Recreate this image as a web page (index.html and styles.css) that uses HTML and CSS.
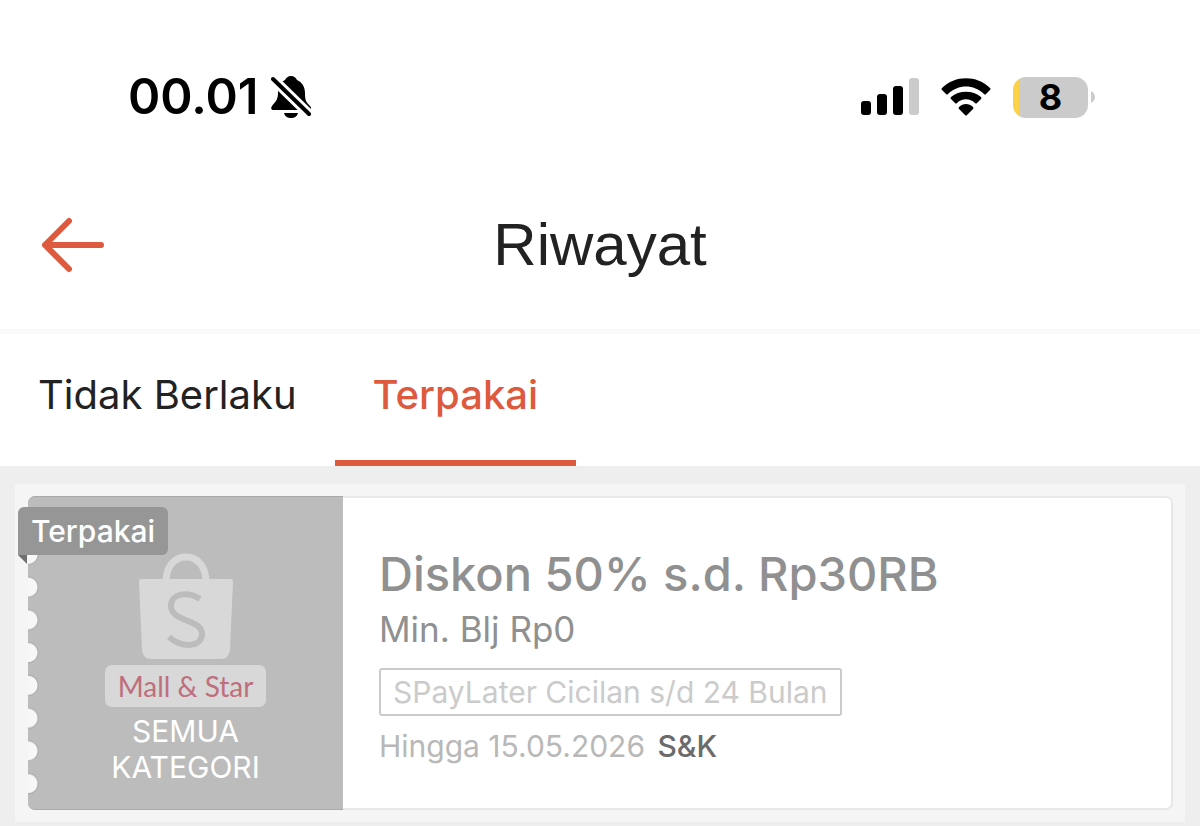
FILE: index.html
```
<!DOCTYPE html>
<html lang="id">
<head>
    <meta charset="UTF-8">
    <meta name="viewport" content="width=device-width, initial-scale=1.0">
    <title>Riwayat</title>
    <link rel="stylesheet" href="styles.css">
</head>
<body>
    <div class="status_bar">
        <div class="status_left">
            <time class="clock">00.01</time>
            <svg class="ico_bell" viewBox="0 0 42 44" width="42" height="44" aria-hidden="true">
                <path d="M20 1C17 1 15 3 14 5C9 7 7 12 7 18C7 25 4 27 1 31C-1 34 1 35 3 35H37C40 35 41 33 39 31C35 27 34 25 34 18C34 12 31 7 26 5C25 3 23 1 20 1Z"/>
                <path d="M13 38H27C26 42 23 43 20 43C17 43 14 42 13 38Z"/>
                <path class="cut" d="M-2 0L43 44"/>
                <path class="slash" d="M2 4L38 39"/>
            </svg>
        </div>
        <div class="status_right">
            <svg class="ico_signal" viewBox="0 0 58 38" width="58" height="38" aria-hidden="true">
                <rect x="0" y="23" width="10" height="14" rx="3"/>
                <rect x="16" y="16" width="10" height="21" rx="3"/>
                <rect x="32" y="8" width="10" height="29" rx="3"/>
                <rect class="off" x="48" y="0" width="10" height="37" rx="3"/>
            </svg>
            <svg class="ico_wifi" viewBox="0 0 50 38" width="50" height="38" aria-hidden="true">
                <path d="M1 10C14 -3 36 -3 49 10Q50 11 49 12L45 16Q44 17 43 16C33 6 17 6 7 16Q6 17 5 16L1 12Q0 11 1 10Z"/>
                <path d="M10 19C18 12 32 12 40 19Q41 20 40 21L36 25Q35 26 34 25C29 20 21 20 16 25Q15 26 14 25L10 21Q9 20 10 19Z"/>
                <path d="M18 29C22 25 28 25 32 29Q33 30 32 31L26 37Q25 38 24 37L18 31Q17 30 18 29Z"/>
            </svg>
            <div class="battery_wrap">
                <div class="battery">8</div>
                <svg class="battery_tip" viewBox="0 0 4 12" width="4" height="12" aria-hidden="true">
                    <path d="M0 0C2 1 4 3 4 6C4 9 2 11 0 12Z"/>
                </svg>
            </div>
        </div>
    </div>

    <header class="header">
        <a href="#" class="back" aria-label="Kembali">
            <svg viewBox="0 0 64 56" width="64" height="56" aria-hidden="true">
                <path d="M28 4L4 28L28 52M4 28H60"/>
            </svg>
        </a>
        <h1 class="title">Riwayat</h1>
    </header>

    <nav class="tabs">
        <button type="button" class="tab">Tidak Berlaku</button>
        <button type="button" class="tab on">Terpakai</button>
    </nav>

    <main class="list">
        <div class="voucher_wrap">
            <article class="voucher">
                <div class="thumb">
                    <span class="ribbon">Terpakai</span>
                    <svg class="ico_bag" viewBox="0 0 94 106" width="94" height="106" aria-hidden="true">
                        <path class="handle" d="M27 29C27 14 35 4 47 4C59 4 67 14 67 29"/>
                        <path class="bag" d="M2 26H92Q94 26 94 28L91 97Q90 106 82 106H12Q4 106 3 97L0 28Q0 26 2 26Z"/>
                        <path class="curve" d="M61 46C49 38 32 40 32 53C32 69 63 66 63 81C63 94 44 96 30 84"/>
                    </svg>
                    <span class="label">Mall &amp; Star</span>
                    <p class="category">SEMUA<br>KATEGORI</p>
                </div>
                <div class="conts">
                    <h2 class="name">Diskon 50% s.d. Rp30RB</h2>
                    <p class="min">Min. Blj Rp0</p>
                    <span class="tag">SPayLater Cicilan s/d 24 Bulan</span>
                    <p class="date">Hingga 15.05.2026 <a href="#">S&amp;K</a></p>
                </div>
            </article>
        </div>
    </main>
</body>
</html>
```
FILE: styles.css
```
* {
    box-sizing: border-box;
}

body {
    margin: 0;
    min-height: 100vh;
    background-color: #eee;
    font-family: Inter, "Liberation Sans", sans-serif;
    color: #222;
}

h1, h2, p {
    margin: 0;
    font-weight: 400;
}

svg {
    display: block;
    flex-shrink: 0;
}

/* status bar */
.status_bar {
    display: flex;
    justify-content: space-between;
    align-items: center;
    padding: 66px 105px 36px 128px;
    background-color: #fff;
    color: #000;
}

.status_left, .status_right, .battery_wrap {
    display: flex;
    align-items: center;
}

.status_left {
    gap: 12px;
}

.status_right {
    gap: 22px;
}

.clock {
    font-size: 49px;
    line-height: 62px;
    font-weight: 600;
}

.ico_bell .cut {
    stroke: #fff;
    stroke-width: 10px;
}

.ico_bell .slash {
    stroke: #000;
    stroke-width: 4px;
    stroke-linecap: round;
}

.ico_signal .off {
    fill: #cbcbcb;
}

.battery_wrap {
    gap: 3px;
}

.battery {
    width: 75px;
    border-radius: 13px;
    background: linear-gradient(to right, #fbd147 6px, #cbcbcb 6px);
    font-size: 36px;
    line-height: 41px;
    font-weight: 700;
    text-align: center;
}

.battery_tip {
    fill: #cbcbcb;
}

/* header */
.header {
    display: grid;
    grid-template-columns: 64px 1fr 64px;
    align-items: center;
    padding: 46px 41px 49px;
    border-bottom: 5px solid #fafafa;
    background-color: #fff;
}

.back svg {
    fill: none;
    stroke: #dd5a3e;
    stroke-width: 6px;
    stroke-linecap: round;
    stroke-linejoin: round;
}

.title {
    font-family: "Liberation Sans", Arial, sans-serif;
    font-size: 60px;
    line-height: 70px;
    text-align: center;
}

/* tabs */
.tabs {
    display: flex;
    background-color: #fff;
}

.tab {
    padding: 36px 38px 40px;
    border: 0;
    border-bottom: 6px solid transparent;
    background: none;
    font-family: inherit;
    font-size: 40px;
    line-height: 50px;
    color: #222;
    cursor: pointer;
}

.tab.on {
    border-color: #dd5a3e;
    font-weight: 500;
    color: #dd5a3e;
}

/* voucher list */
.list {
    padding: 18px 15px 4px;
}

.voucher_wrap {
    padding: 12px 12px 12px 13px;
    background-color: #f5f5f5;
}

.voucher {
    display: flex;
    border: 2px solid #e8e8e8;
    border-left: 0;
    border-radius: 7px;
    background-color: #fff;
}

.thumb {
    display: flex;
    flex-direction: column;
    align-items: center;
    position: relative;
    width: 315px;
    flex-shrink: 0;
    margin: -2px 0;
    padding: 56px 0 24px;
    border: solid #aaa;
    border-width: 1px 0;
    border-radius: 7px 0 0 7px;
    background-color: #bcbcbc;
}

/* punched edge */
.thumb::before {
    content: "";
    position: absolute;
    left: 0;
    top: 41px;
    bottom: 9px;
    width: 12px;
    background: radial-gradient(circle at 0 50%, #f7f7f7 9px, #aaa 10px, transparent 11px) 0 0 / 12px 32px;
    background-repeat: no-repeat round;
}

.ribbon {
    position: absolute;
    left: -10px;
    top: 10px;
    padding: 6px 13px;
    border-radius: 6px 6px 6px 0;
    background-color: #969696;
    font-size: 30px;
    line-height: 36px;
    font-weight: 500;
    color: #fff;
}

.ribbon::after {
    content: "";
    position: absolute;
    left: 0;
    top: 100%;
    border-top: 9px solid #707070;
    border-left: 9px solid transparent;
}

.ico_bag .bag {
    fill: #d8d8d8;
}

.ico_bag .handle {
    fill: none;
    stroke: #d8d8d8;
    stroke-width: 7px;
}

.ico_bag .curve {
    fill: none;
    stroke: #bcbcbc;
    stroke-width: 6px;
}

.label {
    margin: 6px 0;
    padding: 0 13px;
    border-radius: 7px;
    background-color: #d8d8d8;
    font-family: Lato, sans-serif;
    font-size: 28px;
    line-height: 42px;
    color: #bd6f7d;
}

.category {
    font-size: 30px;
    line-height: 36px;
    color: #fff;
    text-align: center;
}

.conts {
    padding: 47px 36px 40px;
}

.name {
    font-size: 47px;
    line-height: 58px;
    font-weight: 500;
    color: #909090;
}

.min {
    font-size: 35px;
    line-height: 52px;
    color: #909090;
}

.tag {
    display: inline-block;
    margin: 13px 0 12px;
    padding: 4px 12px;
    border: 2px solid #cbcbcb;
    border-radius: 3px;
    font-size: 30px;
    line-height: 36px;
    color: #cbcbcb;
}

.date {
    font-size: 30px;
    line-height: 36px;
    color: #b8b8b8;
}

.date a {
    margin-left: 4px;
    font-weight: 500;
    color: #6b6b6b;
    text-decoration: none;
}
```
